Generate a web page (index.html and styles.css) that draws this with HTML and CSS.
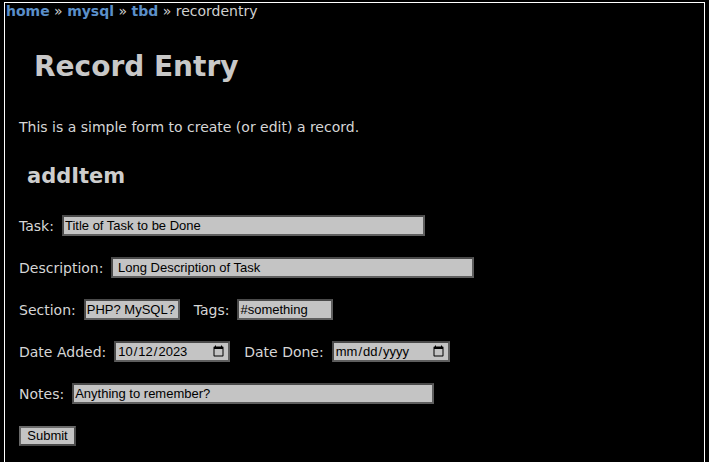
FILE: index.html
```html
<!DOCTYPE html>
<html>
<head>
<meta charset="utf-8">
<title>Record Entry</title>
<link rel="stylesheet" href="styles.css">
</head>
<body>
<div class="page">
  <div class="crumbs"><a href="#">home</a> » <a href="#">mysql</a> » <a href="#">tbd</a> » recordentry</div>
  <div class="content">
    <h1 class="title">Record Entry</h1>
    <p class="intro">This is a simple form to create (or edit) a record.</p>
    <h2 class="subtitle">addItem</h2>
    <form class="form">
      <div class="row">
        <label class="lbl">Task:</label>
        <input class="field w-task" type="text" value="Title of Task to be Done">
      </div>
      <div class="row">
        <label class="lbl">Description:</label>
        <input class="field w-desc" type="text" value=" Long Description of Task">
      </div>
      <div class="row">
        <label class="lbl">Section:</label>
        <input class="field w-section" type="text" value="PHP? MySQL?">
        <label class="lbl lbl-next">Tags:</label>
        <input class="field w-tags" type="text" value="#something">
      </div>
      <div class="row">
        <label class="lbl">Date Added:</label>
        <input class="field w-date1" type="date" value="2023-10-12">
        <label class="lbl lbl-next">Date Done:</label>
        <input class="field w-date2" type="date">
      </div>
      <div class="row">
        <label class="lbl">Notes:</label>
        <input class="field w-notes" type="text" value="Anything to remember?">
      </div>
      <div class="row">
        <button class="btn" type="button">Submit</button>
      </div>
    </form>
  </div>
</div>
</body>
</html>
```

FILE: styles.css
```css
html, body {
  margin: 0;
  padding: 0;
  background: #000;
}
body {
  padding: 2px 4px 0 4px;
  font-family: "DejaVu Sans", Verdana, sans-serif;
  color: #cfcfcf;
}
.page {
  border: 1px solid #fff;
  border-bottom: none;
  height: 470px;
  box-sizing: border-box;
}
.crumbs {
  font-size: 14px;
  line-height: 16px;
  padding-left: 1px;
  color: #d0d0d0;
}
.crumbs a {
  color: #5b8fc9;
  font-weight: bold;
  text-decoration: none;
}
.content {
  padding-left: 14px;
}
.title {
  margin: 30px 0 0 0;
  padding-left: 15px;
  font-size: 28px;
  line-height: 35px;
  font-weight: bold;
  color: #c8c8c8;
}
.intro {
  margin: 35px 0 0 0;
  font-size: 14px;
  line-height: 16px;
  color: #d6d6d6;
}
.subtitle {
  margin: 28px 0 0 0;
  padding-left: 8px;
  font-size: 21px;
  line-height: 26px;
  font-weight: bold;
  color: #cdcdcd;
}
.form {
  margin-top: 26px;
  display: flex;
  flex-direction: column;
  gap: 21px;
}
.row {
  display: flex;
  align-items: center;
  height: 21px;
}
.lbl {
  font-size: 14px;
  color: #d6d6d6;
  margin-right: 8px;
}
.lbl-next {
  margin-left: 14px;
}
.field {
  box-sizing: border-box;
  height: 21px;
  padding: 1px 1px;
  font-family: "Liberation Sans", Arial, sans-serif;
  font-size: 13px;
  color: #000;
  background: #c4c4c4;
  border: 2px solid #5e5e5e;
  border-top-color: #4a4a4a;
  border-left-color: #4a4a4a;
  border-radius: 0;
  color-scheme: light;
  outline: none;
}
.w-task { width: 363px; }
.w-desc { width: 363px; }
.w-section { width: 96px; }
.w-tags { width: 96px; }
.w-date1 { width: 116px; }
.w-date2 { width: 118px; }
.w-notes { width: 362px; }
.btn {
  box-sizing: border-box;
  height: 20px;
  width: 57px;
  padding: 0 4px;
  font-family: "Liberation Sans", Arial, sans-serif;
  font-size: 13px;
  color: #000;
  background: #c4c4c4;
  border: 2px solid #4a4a4a;
  border-top-color: #6a6a6a;
  border-left-color: #6a6a6a;
  border-radius: 0;
}
```
